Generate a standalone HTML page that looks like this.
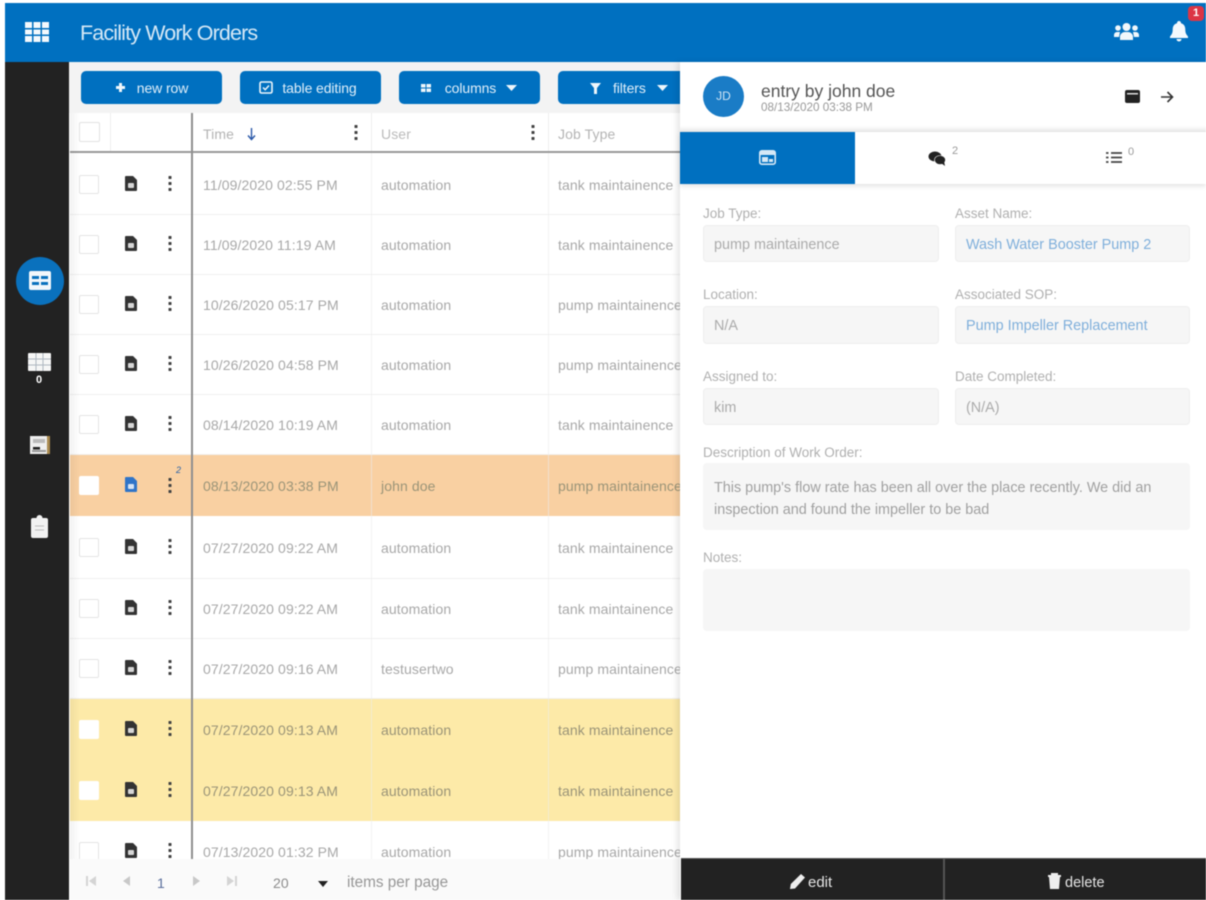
<!DOCTYPE html>
<html><head><meta charset="utf-8"><style>
*{box-sizing:border-box}
html,body{margin:0;padding:0;width:1206px;height:900px;overflow:hidden;background:#fff}
body{font-family:"Liberation Sans",sans-serif;position:relative}
#w{position:absolute;left:0;top:0;width:1206px;height:900px;overflow:hidden;filter:blur(.6px)}
.a,.r,.t,.b,.l,.f,.c,.v,.s{position:absolute}
.r{left:70px;width:610px;border-bottom:1px solid #f0f0f0;background:#fff}
.r.o{background:#f9d0a2}.r.y{background:#fdeaa8}
.r.o,.r.y{border-bottom:0}
.t{font-size:14px;letter-spacing:.1px;color:#a8a8a8;white-space:nowrap;line-height:16px;height:16px}
.o .t,.y .t{color:#9a9478}
.c{width:20px;height:19px;left:9px;border:1px solid #e4e4e4;background:#fff;border-radius:2px}
.o .c,.y .c{border-color:#fff}
.b{top:71px;height:33px;background:#0070c0;border-radius:5px;color:#dfeef9;font-size:14px;letter-spacing:-.1px;text-align:center;line-height:35px}
.l{font-size:13.5px;color:#b0b0b0;white-space:nowrap;line-height:16px}
.f{background:#f6f6f6;border:1px solid #eeeeee;border-radius:4px;font-size:14.4px;color:#ababab;line-height:39px;padding-left:10px;white-space:nowrap}
.f.k{color:#7fafdb}
svg{position:absolute;display:block}
</style></head><body><div id="w">
<svg width="0" height="0"><defs>
<symbol id="file" viewBox="0 0 13 15"><path d="M1 0h7l4 4v10a1 1 0 0 1-1 1H1a1 1 0 0 1-1-1V1a1 1 0 0 1 1-1z" fill="currentColor"/><rect x="3" y="7" width="6" height="5" rx="1" fill="#fff" opacity=".8"/></symbol>
<symbol id="dots" viewBox="0 0 4 15"><rect x=".5" y="0" width="3" height="3" rx=".5" fill="#444"/><rect x=".5" y="6" width="3" height="3" rx=".5" fill="#444"/><rect x=".5" y="12" width="3" height="3" rx=".5" fill="#444"/></symbol>
</defs></svg>

<!-- header -->
<div class="a" style="left:5px;top:3px;width:1201px;height:59px;background:#0070c0"></div>
<svg style="left:24px;top:21px" width="26" height="22" viewBox="0 0 26 22"><path fill="#f4f9fd" d="M1 1h7v6H1zM9.500 1h7v6h-7zM18 1h7v6h-7zM1 8.500h7v5H1zM9.500 8.500h7v5h-7zM18 8.500h7v5h-7zM1 15h7v6H1zM9.500 15h7v6h-7zM18 15h7v6h-7z"/></svg>
<div class="a" style="left:80px;top:20px;font-size:21.500px;letter-spacing:-.85px;color:#d5e8f6;line-height:26px;white-space:nowrap">Facility Work Orders</div>
<svg style="left:1113px;top:22px" width="27" height="19" viewBox="0 0 27 19"><g fill="#f1f7fb"><circle cx="13.500" cy="5" r="4"/><circle cx="5" cy="6" r="2.800"/><circle cx="22" cy="6" r="2.800"/><path d="M7 18v-4a5 5 0 0 1 5-4h3a5 5 0 0 1 5 4v4z"/><path d="M1 15v-2a3 3 0 0 1 3-3h3l-1 5zM26 15v-2a3 3 0 0 0-3-3h-3l1 5z"/></g></svg>
<svg style="left:1169px;top:21px" width="20" height="21" viewBox="0 0 20 21"><path fill="#f4f9fd" d="M10 0a2 2 0 0 1 2 2.300c3 .8 4.300 3.200 4.300 6.200 0 3.500 1 5 2.700 7v1.500H1V15.500c1.700-2 2.700-3.500 2.700-7 0-3 1.300-5.400 4.300-6.200A2 2 0 0 1 10 0z"/><path fill="#f4f9fd" d="M7.500 18h5a2.500 2.500 0 0 1-5 0z"/></svg>
<div class="a" style="left:1188px;top:6px;width:16px;height:15px;background:#dc3545;border-radius:4px;color:#fff;font-size:11px;font-weight:bold;text-align:center;line-height:15px">1</div>

<!-- sidebar -->
<div class="a" style="left:5px;top:62px;width:64px;height:838px;background:#222"></div>
<div class="a" style="left:16px;top:257px;width:48px;height:48px;border-radius:50%;background:#0a71bd"></div>
<svg style="left:29px;top:271px" width="22" height="19" viewBox="0 0 22 19"><rect width="22" height="19" rx="2" fill="#f2f7fb"/><path fill="#0a71bd" d="M3 5h7v3H3zM12 5h7v3h-7zM3 11h7v3H3zM12 11h7v3h-7z"/></svg>
<svg style="left:28px;top:353px" width="23" height="18" viewBox="0 0 23 18"><path fill="#f6f6f6" d="M0 1a1 1 0 0 1 1-1h21a1 1 0 0 1 1 1v16a1 1 0 0 1-1 1H1a1 1 0 0 1-1-1z"/><path stroke="#aeb6c0" stroke-width="1" d="M0 6h23M0 12h23M8 0v18M15 0v18"/></svg>
<div class="a" style="left:34px;top:373px;width:10px;height:14px;color:#fff;font-size:11px;font-weight:bold;text-align:center;line-height:14px">0</div>
<svg style="left:30px;top:436px" width="20" height="18" viewBox="0 0 20 18"><rect width="20" height="18" fill="#efefef"/><rect x="17" width="3" height="18" fill="#a98a50"/><rect x="3" y="3" width="12" height="4" fill="#bbb"/><rect x="3" y="11" width="7" height="2.500" fill="#222"/><rect x="2" y="14" width="14" height="2" fill="#999"/></svg>
<svg style="left:31px;top:515px" width="17" height="23" viewBox="0 0 17 23"><path fill="#f2f2f2" d="M2 3h3.500a3 3 0 0 1 6 0H15a2 2 0 0 1 2 2v16a2 2 0 0 1-2 2H2a2 2 0 0 1-2-2V5a2 2 0 0 1 2-2z"/><path stroke="#bbb" d="M4 11h9M4 15h9"/></svg>

<!-- toolbar -->
<div class="a" style="left:69px;top:62px;width:611px;height:51px;background:#f3f3f3"></div>
<div class="b" style="left:81px;width:141px"><svg style="left:35px;top:12px" width="9" height="9" viewBox="0 0 9 9"><path fill="#eef6fb" d="M3 0h3v3h3v3H6v3H3V6H0V3h3z"/></svg><span style="margin-left:22px">new row</span></div>
<div class="b" style="left:240px;width:141px"><svg style="left:19px;top:10px" width="14" height="13" viewBox="0 0 14 13"><rect x="1" y="1" width="12" height="11" rx="1.500" fill="none" stroke="#eef6fb" stroke-width="1.600"/><path d="M4 6.500l2.200 2.200L10 4.500" fill="none" stroke="#eef6fb" stroke-width="1.500"/></svg><span style="margin-left:18px">table editing</span></div>
<div class="b" style="left:399px;width:141px"><svg style="left:22px;top:13px" width="10" height="8" viewBox="0 0 10 8"><rect width="10" height="8" fill="#eef6fb"/><path stroke="#0070c0" d="M5 0v8M0 4h10"/></svg><span style="margin-left:2px">columns</span><svg style="left:107px;top:14px" width="11" height="6" viewBox="0 0 11 6"><path d="M0 0h11L5.500 6z" fill="#eef6fb"/></svg></div>
<div class="b" style="left:558px;width:141px;text-align:left"><svg style="left:32px;top:12px" width="11" height="11" viewBox="0 0 11 11"><path d="M0 0h11L7 5v6H4V5z" fill="#eef6fb"/></svg><span style="margin-left:55px">filters</span><svg style="left:99px;top:14px" width="11" height="6" viewBox="0 0 11 6"><path d="M0 0h11L5.500 6z" fill="#eef6fb"/></svg></div>

<!-- table head -->
<div class="a" style="left:70px;top:113px;width:610px;height:40px;background:#fff;border-bottom:2px solid #999"></div>
<div class="a" style="left:79px;top:122px;width:21px;height:20px;background:#fff;border:1px solid #e2e2e2;border-radius:2px"></div>
<div class="a" style="left:110px;top:113px;width:1px;height:38px;background:#eee"></div>
<div class="a" style="left:371px;top:113px;width:1px;height:38px;background:#eee"></div>
<div class="a" style="left:548px;top:113px;width:1px;height:38px;background:#eee"></div>
<div class="t" style="left:203px;top:126px;color:#b4b4b4">Time</div>
<svg style="left:247px;top:128px" width="9" height="13" viewBox="0 0 9 13"><path d="M4.500 0v11M1 7.500l3.500 4 3.500-4" fill="none" stroke="#2a58a8" stroke-width="1.400"/></svg>
<svg style="left:354px;top:125px;width:4px;height:15px"><use href="#dots"/></svg>
<div class="t" style="left:381px;top:126px;color:#bbb">User</div>
<svg style="left:531px;top:125px;width:4px;height:15px"><use href="#dots"/></svg>
<div class="t" style="left:558px;top:126px;color:#b4b4b4">Job Type</div>

<!-- rows -->
<div class="r" style="top:153px;height:62px"><div class="c" style="top:22px"></div><svg style="left:55px;top:23px;width:13px;height:15px;color:#333"><use href="#file"/></svg><svg style="left:98px;top:23px;width:4px;height:15px"><use href="#dots"/></svg><div class="t" style="left:133px;top:24px">11/09/2020 02:55 PM</div><div class="t" style="left:311px;top:24px">automation</div><div class="t" style="left:488px;top:24px">tank maintainence</div></div>
<div class="r" style="top:215px;height:60px"><div class="c" style="top:20px"></div><svg style="left:55px;top:21px;width:13px;height:15px;color:#333"><use href="#file"/></svg><svg style="left:98px;top:21px;width:4px;height:15px"><use href="#dots"/></svg><div class="t" style="left:133px;top:22px">11/09/2020 11:19 AM</div><div class="t" style="left:311px;top:22px">automation</div><div class="t" style="left:488px;top:22px">tank maintainence</div></div>
<div class="r" style="top:275px;height:60px"><div class="c" style="top:20px"></div><svg style="left:55px;top:21px;width:13px;height:15px;color:#333"><use href="#file"/></svg><svg style="left:98px;top:21px;width:4px;height:15px"><use href="#dots"/></svg><div class="t" style="left:133px;top:22px">10/26/2020 05:17 PM</div><div class="t" style="left:311px;top:22px">automation</div><div class="t" style="left:488px;top:22px">pump maintainence</div></div>
<div class="r" style="top:335px;height:60px"><div class="c" style="top:20px"></div><svg style="left:55px;top:21px;width:13px;height:15px;color:#333"><use href="#file"/></svg><svg style="left:98px;top:21px;width:4px;height:15px"><use href="#dots"/></svg><div class="t" style="left:133px;top:22px">10/26/2020 04:58 PM</div><div class="t" style="left:311px;top:22px">automation</div><div class="t" style="left:488px;top:22px">pump maintainence</div></div>
<div class="r" style="top:395px;height:60px"><div class="c" style="top:20px"></div><svg style="left:55px;top:21px;width:13px;height:15px;color:#333"><use href="#file"/></svg><svg style="left:98px;top:21px;width:4px;height:15px"><use href="#dots"/></svg><div class="t" style="left:133px;top:22px">08/14/2020 10:19 AM</div><div class="t" style="left:311px;top:22px">automation</div><div class="t" style="left:488px;top:22px">tank maintainence</div></div>
<div class="r o" style="top:455px;height:61px"><div class="c" style="top:21px"></div><svg style="left:55px;top:22px;width:13px;height:15px;color:#2f74c8"><use href="#file"/></svg><svg style="left:98px;top:23px;width:4px;height:15px"><use href="#dots"/></svg><div class="a" style="left:106px;top:10px;font-size:9px;font-style:italic;color:#2a62a8">2</div><div class="t" style="left:133px;top:23px">08/13/2020 03:38 PM</div><div class="t" style="left:311px;top:23px">john doe</div><div class="t" style="left:488px;top:23px">pump maintainence</div></div>
<div class="r" style="top:516px;height:63px"><div class="c" style="top:22px"></div><svg style="left:55px;top:23px;width:13px;height:15px;color:#333"><use href="#file"/></svg><svg style="left:98px;top:23px;width:4px;height:15px"><use href="#dots"/></svg><div class="t" style="left:133px;top:24px">07/27/2020 09:22 AM</div><div class="t" style="left:311px;top:24px">automation</div><div class="t" style="left:488px;top:24px">tank maintainence</div></div>
<div class="r" style="top:579px;height:60px"><div class="c" style="top:20px"></div><svg style="left:55px;top:21px;width:13px;height:15px;color:#333"><use href="#file"/></svg><svg style="left:98px;top:21px;width:4px;height:15px"><use href="#dots"/></svg><div class="t" style="left:133px;top:22px">07/27/2020 09:22 AM</div><div class="t" style="left:311px;top:22px">automation</div><div class="t" style="left:488px;top:22px">tank maintainence</div></div>
<div class="r" style="top:639px;height:60px"><div class="c" style="top:20px"></div><svg style="left:55px;top:21px;width:13px;height:15px;color:#333"><use href="#file"/></svg><svg style="left:98px;top:21px;width:4px;height:15px"><use href="#dots"/></svg><div class="t" style="left:133px;top:22px">07/27/2020 09:16 AM</div><div class="t" style="left:311px;top:22px">testusertwo</div><div class="t" style="left:488px;top:22px">pump maintainence</div></div>
<div class="r y" style="top:699px;height:61px"><div class="c" style="top:21px"></div><svg style="left:55px;top:22px;width:13px;height:15px;color:#333"><use href="#file"/></svg><svg style="left:98px;top:22px;width:4px;height:15px"><use href="#dots"/></svg><div class="t" style="left:133px;top:23px">07/27/2020 09:13 AM</div><div class="t" style="left:311px;top:23px">automation</div><div class="t" style="left:488px;top:23px">tank maintainence</div></div>
<div class="r y" style="top:760px;height:61px"><div class="c" style="top:21px"></div><svg style="left:55px;top:22px;width:13px;height:15px;color:#333"><use href="#file"/></svg><svg style="left:98px;top:22px;width:4px;height:15px"><use href="#dots"/></svg><div class="t" style="left:133px;top:23px">07/27/2020 09:13 AM</div><div class="t" style="left:311px;top:23px">automation</div><div class="t" style="left:488px;top:23px">tank maintainence</div></div>
<div class="r" style="top:821px;height:60px;border:0"><div class="c" style="top:21px"></div><svg style="left:55px;top:22px;width:13px;height:15px;color:#333"><use href="#file"/></svg><svg style="left:98px;top:22px;width:4px;height:15px"><use href="#dots"/></svg><div class="t" style="left:133px;top:23px">07/13/2020 01:32 PM</div><div class="t" style="left:311px;top:23px">automation</div><div class="t" style="left:488px;top:23px">pump maintainence</div></div>

<!-- column separators -->
<div class="a" style="left:191px;top:113px;width:2px;height:747px;background:#8f8f8f"></div>
<div class="a" style="left:371px;top:153px;width:1px;height:707px;background:rgba(235,235,235,.6)"></div>
<div class="a" style="left:548px;top:153px;width:1px;height:707px;background:rgba(235,235,235,.6)"></div>
<div class="a" style="left:70px;top:113px;width:10px;height:747px;background:linear-gradient(90deg,rgba(0,0,0,.05),transparent)"></div>

<!-- pagination -->
<div class="a" style="left:70px;top:859px;width:610px;height:41px;background:#fafafa"></div>
<svg style="left:85px;top:876px" width="12" height="10" viewBox="0 0 12 10"><path fill="#d4d4d4" d="M1 0h2v10H1zM11 0v10L4 5z"/></svg>
<svg style="left:122px;top:876px" width="9" height="10" viewBox="0 0 9 10"><path fill="#c8c8c8" d="M8 0v10L1 5z"/></svg>
<div class="t" style="left:157px;top:875px;color:#5a6e9c;font-size:14px">1</div>
<svg style="left:192px;top:876px" width="9" height="10" viewBox="0 0 9 10"><path fill="#c8c8c8" d="M1 0v10l7-5z"/></svg>
<svg style="left:226px;top:876px" width="12" height="10" viewBox="0 0 12 10"><path fill="#d4d4d4" d="M9 0h2v10H9zM1 0v10l7-5z"/></svg>
<div class="t" style="left:273px;top:875px;font-size:14px;color:#8c8c8c">20</div>
<svg style="left:318px;top:881px" width="10" height="6" viewBox="0 0 10 6"><path d="M0 0h10L5 6z" fill="#222"/></svg>
<div class="t" style="left:347px;top:875px;font-size:15.300px;letter-spacing:0;color:#979797">items per page</div>

<!-- panel -->
<div class="a" style="left:680px;top:62px;width:526px;height:838px;background:#fff;box-shadow:-3px 0 6px rgba(0,0,0,.1)"></div>
<div class="a" style="left:680px;top:126px;width:526px;height:6px;background:linear-gradient(180deg,#fff,#e8e8e8)"></div>
<div class="a" style="left:703px;top:76px;width:41px;height:41px;border-radius:50%;background:#1a7cc6;color:#cfe4f4;font-size:12px;text-align:center;line-height:41px">JD</div>
<div class="a" style="left:761px;top:81px;font-size:17.500px;color:#555;line-height:20px;white-space:nowrap">entry by john doe</div>
<div class="a" style="left:761px;top:101px;font-size:11.700px;color:#999;line-height:13px;white-space:nowrap">08/13/2020 03:38 PM</div>
<svg style="left:1125px;top:90px" width="15" height="13" viewBox="0 0 15 13"><path fill="#222" d="M2 0h11a2 2 0 0 1 2 2v9a2 2 0 0 1-2 2H2a2 2 0 0 1-2-2V2a2 2 0 0 1 2-2z"/><rect x="2" y="3" width="11" height="1.500" fill="#ddd"/></svg>
<svg style="left:1161px;top:91px" width="13" height="12" viewBox="0 0 13 12"><path d="M0 6h11M6.500 1l5 5-5 5" fill="none" stroke="#333" stroke-width="1.600"/></svg>

<!-- tabs -->
<div class="a" style="left:680px;top:132px;width:526px;height:52px;background:#fff;box-shadow:0 2px 5px rgba(0,0,0,.12)"></div>
<div class="a" style="left:680px;top:132px;width:175px;height:52px;background:#0070c0"></div>
<svg style="left:759px;top:150px" width="17" height="15" viewBox="0 0 17 15"><rect x=".8" y=".8" width="15.400" height="13.400" rx="2" fill="#0070c0" stroke="#d5e8f6" stroke-width="1.600"/><rect x="1" y="1" width="15" height="4" fill="#d5e8f6"/><rect x="3" y="7" width="6" height="5" fill="#d5e8f6"/><rect x="10" y="9" width="4" height="3" fill="#d5e8f6"/></svg>
<svg style="left:928px;top:151px" width="18" height="15" viewBox="0 0 18 15"><ellipse cx="7" cy="5.500" rx="6.500" ry="5" fill="#222"/><ellipse cx="12" cy="9" rx="5.500" ry="4.500" fill="#222" stroke="#fff" stroke-width=".6"/><path d="M13 12l4 3-1-5z" fill="#222"/></svg>
<div class="a" style="left:952px;top:145px;font-size:11px;color:#9a9a9a;line-height:13px">2</div>
<svg style="left:1106px;top:151px" width="16" height="13" viewBox="0 0 16 13"><path stroke="#444" stroke-width="1.800" d="M0 2h2.500M5 2h11M0 6.500h2.500M5 6.500h11M0 11h2.500M5 11h11"/></svg>
<div class="a" style="left:1128px;top:146px;font-size:11px;color:#9a9a9a;line-height:13px">0</div>

<!-- form -->
<div class="l" style="left:703px;top:206px">Job Type:</div>
<div class="l" style="left:955px;top:206px">Asset Name:</div>
<div class="f" style="left:703px;top:225px;width:236px;height:37px">pump maintainence</div>
<div class="f k" style="left:955px;top:225px;width:235px;height:37px">Wash Water Booster Pump 2</div>
<div class="l" style="left:703px;top:287px">Location:</div>
<div class="l" style="left:955px;top:287px">Associated SOP:</div>
<div class="f" style="left:703px;top:306px;width:236px;height:38px">N/A</div>
<div class="f k" style="left:955px;top:306px;width:235px;height:38px">Pump Impeller Replacement</div>
<div class="l" style="left:703px;top:369px">Assigned to:</div>
<div class="l" style="left:955px;top:369px">Date Completed:</div>
<div class="f" style="left:703px;top:388px;width:236px;height:37px">kim</div>
<div class="f" style="left:955px;top:388px;width:235px;height:37px">(N/A)</div>
<div class="l" style="left:703px;top:445px">Description of Work Order:</div>
<div class="f" style="left:703px;top:463px;width:487px;height:67px;line-height:22px;padding-top:14px;padding-left:11px;border:0;color:#a0a0a0;white-space:normal;padding-right:20px">This pump's flow rate has been all over the place recently. We did an inspection and found the impeller to be bad</div>
<div class="l" style="left:703px;top:550px">Notes:</div>
<div class="f" style="left:703px;top:569px;width:487px;height:62px;border:0"></div>

<!-- footer -->
<div class="a" style="left:681px;top:858px;width:525px;height:42px;background:#222;border-top:1px solid #555"></div>
<div class="a" style="left:943px;top:858px;width:2px;height:42px;background:#555"></div>
<svg style="left:790px;top:874px" width="15" height="15" viewBox="0 0 15 15"><path fill="#eee" d="M11 0l4 3.500L5 14.500 0 15l.8-5z"/></svg>
<div class="a" style="left:808px;top:874px;font-size:15px;color:#e6e6e6;line-height:17px">edit</div>
<svg style="left:1048px;top:873px" width="13" height="16" viewBox="0 0 13 16"><path fill="#eee" d="M0 2h13v2H12l-1 12H2L1 4H0z"/><rect x="3" y="0" width="7" height="2" fill="#eee"/></svg>
<div class="a" style="left:1065px;top:875px;font-size:14.500px;color:#e6e6e6;line-height:17px">delete</div>
</div></body></html>
